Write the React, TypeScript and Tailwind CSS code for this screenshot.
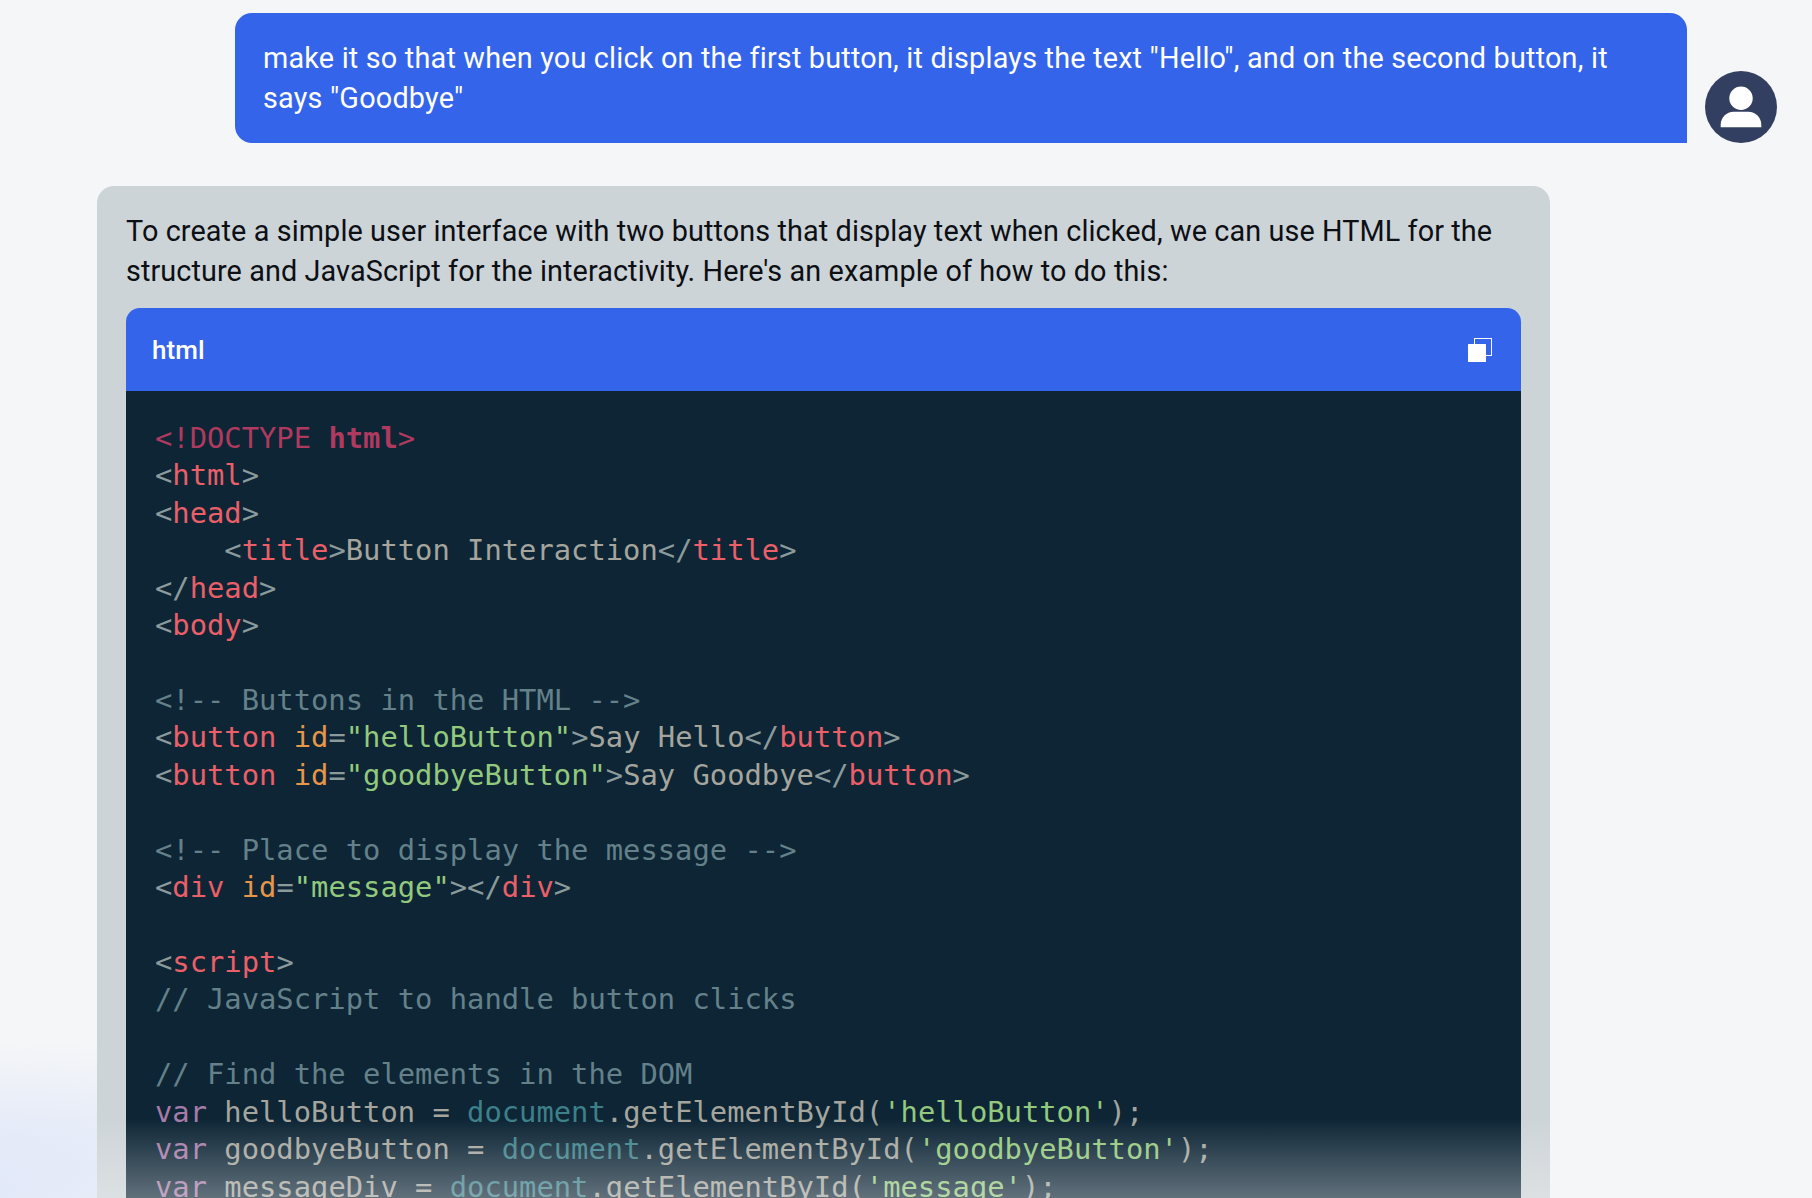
const C = {
  doc: "text-[#b03a5f]",
  tag: "text-[#ea5f68]",
  p: "text-[#8b9a9b]",
  txt: "text-[#a5a59d]",
  attr: "text-[#e8964a]",
  str: "text-[#93c97c]",
  com: "text-[#64818a]",
  kw: "text-[#a67ba8]",
  dom: "text-[#3d8089]",
};

type Span = [string, string?];

const LINES: Span[][] = [
  [["<!DOCTYPE ", C.doc], ["html", C.doc + " font-bold"], [">", C.doc]],
  [["<", C.p], ["html", C.tag], [">", C.p]],
  [["<", C.p], ["head", C.tag], [">", C.p]],
  [["    <", C.p], ["title", C.tag], [">", C.p], ["Button Interaction", C.txt], ["</", C.p], ["title", C.tag], [">", C.p]],
  [["</", C.p], ["head", C.tag], [">", C.p]],
  [["<", C.p], ["body", C.tag], [">", C.p]],
  [],
  [["<!-- Buttons in the HTML -->", C.com]],
  [["<", C.p], ["button ", C.tag], ["id", C.attr], ["=", C.p], ['"helloButton"', C.str], [">", C.p], ["Say Hello", C.txt], ["</", C.p], ["button", C.tag], [">", C.p]],
  [["<", C.p], ["button ", C.tag], ["id", C.attr], ["=", C.p], ['"goodbyeButton"', C.str], [">", C.p], ["Say Goodbye", C.txt], ["</", C.p], ["button", C.tag], [">", C.p]],
  [],
  [["<!-- Place to display the message -->", C.com]],
  [["<", C.p], ["div ", C.tag], ["id", C.attr], ["=", C.p], ['"message"', C.str], ["></", C.p], ["div", C.tag], [">", C.p]],
  [],
  [["<", C.p], ["script", C.tag], [">", C.p]],
  [["// JavaScript to handle button clicks", C.com]],
  [],
  [["// Find the elements in the DOM", C.com]],
  [["var ", C.kw], ["helloButton = ", C.txt], ["document", C.dom], [".getElementById(", C.txt], ["'helloButton'", C.str], [");", C.txt]],
  [["var ", C.kw], ["goodbyeButton = ", C.txt], ["document", C.dom], [".getElementById(", C.txt], ["'goodbyeButton'", C.str], [");", C.txt]],
  [["var ", C.kw], ["messageDiv = ", C.txt], ["document", C.dom], [".getElementById(", C.txt], ["'message'", C.str], [");", C.txt]],
];

function UserIcon() {
  return (
    <svg viewBox="0 0 72 72" className="w-[72px] h-[72px] shrink-0">
      <circle cx="36" cy="36" r="36" fill="#333f60" />
      <circle cx="36" cy="27.3" r="11.7" fill="#fff" />
      <path d="M15.7 56.3v-2.6c0-7.2 5.8-13 13-13h14.6c7.2 0 13 5.8 13 13v2.6z" fill="#fff" />
    </svg>
  );
}

function CopyIcon() {
  return (
    <svg viewBox="0 0 24 24" className="w-6 h-6">
      <rect x="6.5" y="0.5" width="17" height="17" fill="none" stroke="#fff" strokeWidth="1" />
      <rect x="0" y="6" width="18" height="18" rx="0.5" fill="#fff" />
    </svg>
  );
}

export default function App() {
  return (
    <div className="relative h-screen overflow-hidden bg-[#f5f6f8] font-['Roboto',sans-serif] text-[28.8px] leading-[40px] tracking-[0.1px]">
      <div className="pointer-events-none absolute bottom-0 left-0 h-[160px] w-[400px] bg-[radial-gradient(ellipse_at_bottom_left,#d8e2f8,#f5f6f800_70%)]" />

      <div className="relative">
        {/* user message */}
        <div className="flex items-end gap-[18px] pt-[13px] pl-[235px]">
          <div className="w-[1452px] rounded-t-[17px] rounded-bl-[17px] bg-[#3464ea] pt-[25px] pr-[40px] pb-[25px] pl-[28px] tracking-[0.2px] text-white">
            make it so that when you click on the first button, it displays the text "Hello", and on the second button, it says "Goodbye"
          </div>
          <UserIcon />
        </div>

        {/* assistant message */}
        <div className="mt-[43px] ml-[97px] w-[1453px] rounded-t-[17px] bg-[#cdd4d7] px-[29px] pt-[25px] text-[#0c0f14]">
          <p className="mb-[17px]">
            To create a simple user interface with two buttons that display text when clicked, we can use HTML for the structure and JavaScript for the interactivity. Here's an example of how to do this:
          </p>
          <div className="overflow-hidden rounded-t-[14px]">
            <div className="flex h-[83px] items-center justify-between bg-[#3464ea] pr-[29px] pl-[26px]">
              <span className="text-[26px] font-medium text-white">html</span>
              <CopyIcon />
            </div>
            <pre className="bg-[#0d2535] px-[29px] pt-[28.8px] font-['DejaVu_Sans_Mono',monospace] text-[28.8px] leading-[37.44px] tracking-normal">
              {LINES.map((line, i) => (
                <div key={i} className="h-[37.44px]">
                  {line.map(([text, cls], j) => (
                    <span key={j} className={cls}>{text}</span>
                  ))}
                </div>
              ))}
            </pre>
          </div>
        </div>
      </div>

      {/* bottom fade */}
      <div className="pointer-events-none absolute inset-x-0 bottom-0 h-[80px] bg-gradient-to-b from-[#f5f6f800] to-[#f5f6f85c]" />
    </div>
  );
}
